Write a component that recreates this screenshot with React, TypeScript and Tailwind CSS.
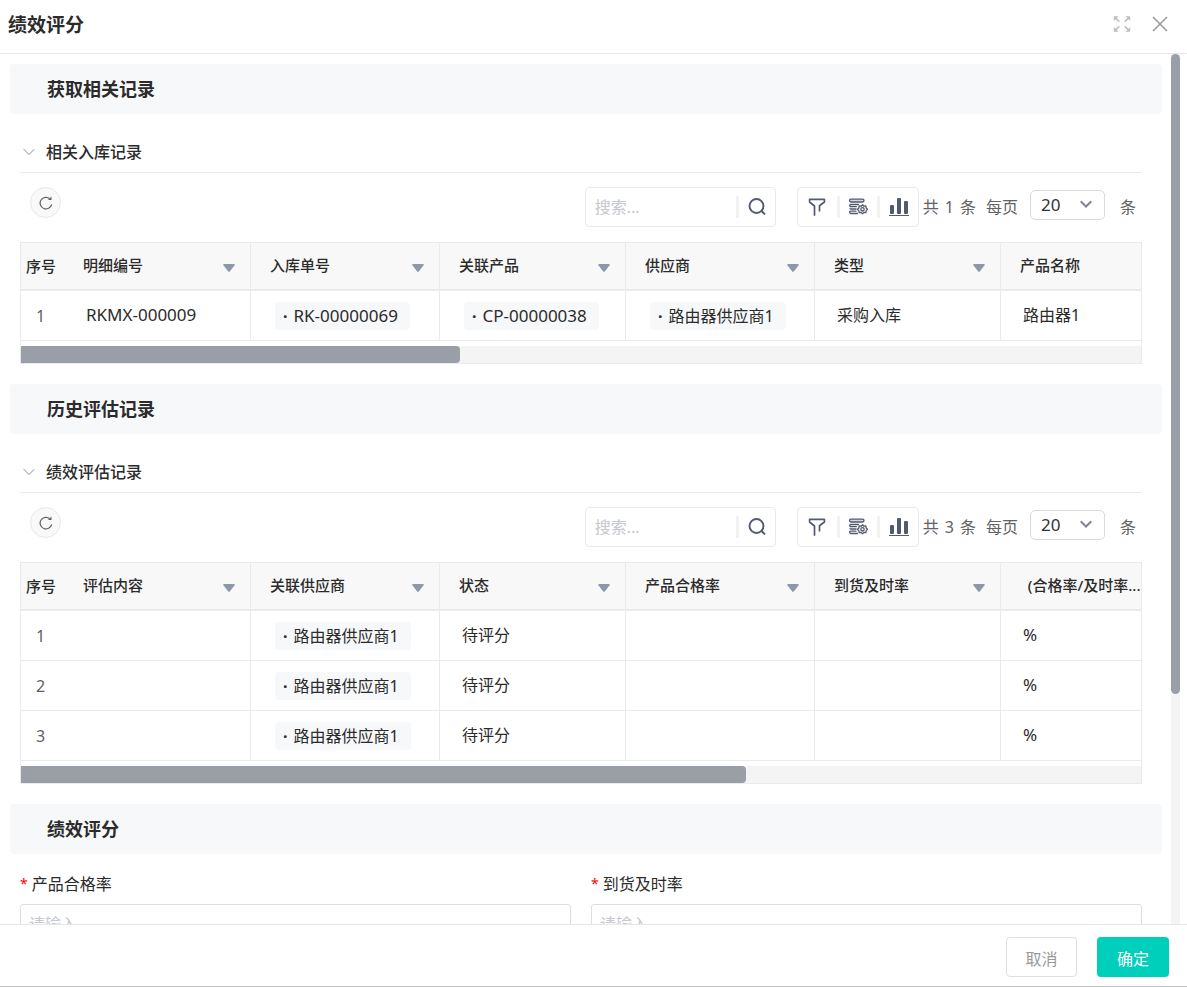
import { useState, type ReactNode } from 'react';

type Cell = { text: string; tag?: boolean; latin?: boolean } | null;

interface RecordPanelProps {
  id: string;
  title: string;
  columns: string[];
  rows: Cell[][];
  thumbClass: string;
}

const inboundColumns = ['明细编号', '入库单号', '关联产品', '供应商', '类型', '产品名称'];
const inboundRows: Cell[][] = [
  [
    { text: 'RKMX-000009', latin: true },
    { text: 'RK-00000069', tag: true, latin: true },
    { text: 'CP-00000038', tag: true, latin: true },
    { text: '路由器供应商1', tag: true },
    { text: '采购入库' },
    { text: '路由器1' },
  ],
];

const reviewColumns = ['评估内容', '关联供应商', '状态', '产品合格率', '到货及时率', '\u00a0\u00a0(合格率/及时率...'];
const reviewRow: Cell[] = [
  null,
  { text: '路由器供应商1', tag: true },
  { text: '待评分' },
  null,
  null,
  { text: '%', latin: true },
];
const reviewRows: Cell[][] = [reviewRow, reviewRow, reviewRow];

const ExpandIcon = () => (
  <svg width="18" height="18" viewBox="0 0 18 18" fill="#bfbfbf" stroke="#bfbfbf">
    <path d="M.8 1.200h4.700L.8 5.900zM17.200 1.200h-4.700l4.700 4.700zM.8 16.800h4.700L.8 12.100zM17.200 16.800h-4.700l4.700-4.700z" stroke="none" />
    <path d="M2 2.400l4.300 4.300M16 2.400l-4.300 4.300M2 15.600l4.300-4.300M16 15.600l-4.300-4.300" strokeWidth="1.600" />
  </svg>
);

const CloseIcon = () => (
  <svg width="16" height="16" viewBox="0 0 16 16" fill="none" stroke="#999" strokeWidth="1.500">
    <path d="M1 1l14 14M15 1L1 15" />
  </svg>
);

const ChevronIcon = ({ className }: { className: string }) => (
  <svg width="12" height="8" viewBox="0 0 12 8" fill="none" stroke="currentColor" className={className}>
    <path d="M.7 1.200L6 6.500l5.300-5.300" />
  </svg>
);

const RefreshIcon = () => (
  <svg width="14" height="14" viewBox="0 0 14 14" fill="none" stroke="#666" strokeWidth="1.300">
    <path d="M12.600 8.300A5.800 5.800 0 1 1 10.900 2.900" />
    <path d="M9 3.900h3.500V.6z" fill="#666" stroke="none" />
  </svg>
);

const SearchIcon = () => (
  <svg width="18" height="18" viewBox="0 0 18 18" fill="none" stroke="#515a6e" strokeWidth="1.900">
    <circle cx="8.500" cy="8" r="7" />
    <path d="M13.500 13l3.500 3.500" />
  </svg>
);

const FilterIcon = () => (
  <svg width="18" height="20" viewBox="0 0 18 20" fill="none" stroke="#515a6e" strokeWidth="1.700" strokeLinejoin="round">
    <path d="M6.500 18.800V9L1.600 5V2.300h14.800V5l-4.900 3.700V14.500" />
  </svg>
);

const FieldsIcon = () => (
  <svg width="20" height="20" viewBox="0 0 20 20" fill="none" stroke="#515a6e" strokeWidth="1.300">
    <rect x="1.500" y="2.200" width="14.500" height="2.800" rx="1.400" fill="#d3d6dc" />
    <path d="M11 7.500H2.800a1 1 0 0 0 0 2.200h6M8.500 12H2a1 1 0 0 0 0 .1M8.500 14.200H2.800a1 1 0 0 0 0 2.300H10" />
    <path
      d="M14.500 7.700l1.300 1.500 2-.2.400 2 1.300 1.300-1.300 1.300-.4 2-2-.2-1.300 1.500-1.300-1.500-2 .2-.4-2-1.300-1.300 1.300-1.300.4-2 2 .2z"
      fill="#fff"
      strokeLinejoin="round"
    />
    <circle cx="14.500" cy="12.300" r="1.700" />
  </svg>
);

const ChartIcon = () => (
  <svg width="20" height="20" viewBox="0 0 20 20" fill="#515a6e">
    <rect x="1" y="8" width="4" height="9" rx="1" />
    <rect x="8" y="1" width="4" height="16" rx="1" />
    <rect x="15" y="4" width="4" height="13" rx="1" />
    <rect x="0" y="18" width="20" height="1" />
  </svg>
);

const SectionBand = ({ children }: { children: ReactNode }) => (
  <h2 className="flex h-[50px] items-center rounded bg-[#f7f8fa] px-[37px] text-[18px] font-bold">{children}</h2>
);

const Divider = () => <span className="h-[22px] w-[3px] bg-[#f2f2f2]" />;

const Tag = ({ children }: { children: ReactNode }) => (
  <span className="ml-[2px] inline-flex h-7 items-center gap-[6px] rounded bg-[#f7f8fa] pr-3 pl-2 align-middle">
    <b className="text-[16px]">·</b>
    {children}
  </span>
);

const RecordPanel = ({ id, title, columns, rows, thumbClass }: RecordPanelProps) => {
  const [open, setOpen] = useState(true);

  return (
    <section className="mb-5 pt-5 pr-5 pl-[10px]">
      <h3 className="border-b border-[#ebebeb]">
        <button
          type="button"
          onClick={() => setOpen(!open)}
          className="flex h-[38px] w-full items-center gap-[11px] pb-[2px] pl-[3px] text-[16px] font-medium"
        >
          <ChevronIcon className="text-[#888]" />
          {title}
        </button>
      </h3>

      {open && (
        <>
          {/* Toolbar */}
          <div className="flex h-[69px] items-center pb-[2px] text-[#606266]">
            <button
              type="button"
              aria-label="刷新"
              className="mb-2 ml-[10px] flex size-[31px] items-center justify-center rounded-full border border-[#e8e8e8] bg-[#f9f9f9]"
            >
              <RefreshIcon />
            </button>
            <div className="ml-auto flex h-10 w-[191px] items-center rounded border border-[#e8eaec]">
              <input
                id={`${id}-search`}
                aria-label="搜索"
                placeholder="搜索..."
                className="h-full min-w-0 flex-1 px-[9px] text-[16px] outline-none placeholder:text-[#c5c8ce]"
              />
              <Divider />
              <button type="button" aria-label="查询" className="flex h-full w-9 items-center justify-center">
                <SearchIcon />
              </button>
            </div>
            <div className="ml-[21px] flex h-10 items-center rounded border border-[#e8eaec]">
              <button type="button" aria-label="筛选" className="flex h-full w-[39px] items-center justify-center">
                <FilterIcon />
              </button>
              <Divider />
              <button type="button" aria-label="字段设置" className="flex h-full w-[37px] items-center justify-center">
                <FieldsIcon />
              </button>
              <Divider />
              <button type="button" aria-label="图表" className="flex h-full w-[38px] items-center justify-center">
                <ChartIcon />
              </button>
            </div>
            <span className="ml-1 flex gap-[6px]">
              <span>共</span>
              <span>{rows.length}</span>
              <span>条</span>
            </span>
            <label htmlFor={`${id}-size`} className="ml-[10px]">
              每页
            </label>
            <div className="relative mb-1 ml-3">
              <select
                id={`${id}-size`}
                defaultValue="20"
                className="block h-[30px] w-[75px] appearance-none rounded-[5px] border border-[#d7dae0] pl-[10px] text-[17px] text-[#333]"
              >
                <option>20</option>
                <option>50</option>
              </select>
              <ChevronIcon className="pointer-events-none absolute top-[10px] right-[13px] stroke-2 text-[#808695]" />
            </div>
            <span className="mr-[6px] ml-[15px]">条</span>
          </div>

          {/* Records */}
          <div className="overflow-hidden border border-[#e8eaec]">
            <table className="w-[1168px] min-w-full table-fixed border-separate border-spacing-0 text-left">
              <colgroup>
                <col className="w-[43px]" />
                <col className="w-[187px]" />
                <col className="w-[189px]" />
                <col className="w-[186px]" />
                <col className="w-[189px]" />
                <col className="w-[186px]" />
                <col />
              </colgroup>
              <thead>
                <tr className="h-12 bg-[#f8f8f9] text-[15px]">
                  <th className="border-b-2 border-[#e8eaec] pl-[5px] font-medium whitespace-nowrap">序号</th>
                  {columns.map((name) => (
                    <th key={name} className="border-r border-b-2 border-[#e8eaec] pr-[15px] pb-[2px] pl-[19px] font-medium">
                      <div className="flex items-center justify-between whitespace-nowrap">
                        {name}
                        <svg width="12" height="8" viewBox="0 0 12 8" fill="#8c98a8" className="mt-[6px] shrink-0">
                          <path d="M1 0h10q1 .3.600 1.200L7 7.200q-1 1-2 0L.4 1.200Q0 .3 1 0z" />
                        </svg>
                      </div>
                    </th>
                  ))}
                </tr>
              </thead>
              <tbody>
                {rows.map((row, index) => (
                  <tr key={index} className="h-[50px]">
                    <td className="border-b border-[#e8eaec] pl-[15px] text-[#606266]">{index + 1}</td>
                    {row.map((cell, i) => (
                      <td
                        key={i}
                        className={`border-r border-b border-[#e8eaec] pl-[22px] whitespace-nowrap ${
                          cell?.latin ? 'text-[17px]' : 'text-[16px]'
                        } ${cell?.tag ? 'pt-px' : 'pb-[2px]'}`}
                      >
                        {cell && (cell.tag ? <Tag>{cell.text}</Tag> : cell.text)}
                      </td>
                    ))}
                  </tr>
                ))}
              </tbody>
            </table>
            <div className="mt-[5px] h-[17px] bg-[#f4f4f4]">
              <div className={`h-full rounded-r bg-[#9a9ea7] ${thumbClass}`} />
            </div>
          </div>
        </>
      )}
    </section>
  );
};

const ScoreField = ({ id, label }: { id: string; label: string }) => (
  <div>
    <label htmlFor={id} className="flex h-[30px] items-center gap-1">
      <span className="text-[14px] text-[#f00]">*</span>
      {label}
    </label>
    <input
      id={id}
      placeholder="请输入"
      className="mt-[5px] block h-10 w-full rounded-[3px] border border-[#dcdee2] px-2 text-[16px] outline-none placeholder:text-[#c5c8ce]"
    />
  </div>
);

export default function App() {
  return (
    <div className="flex h-screen flex-col overflow-hidden border-b border-[#c0c0c0] bg-white font-['Noto_Sans','Noto_Sans_CJK_SC',sans-serif] text-[16px] leading-6 text-[#2b2b2b]">
      <header className="flex h-[54px] shrink-0 items-center border-b border-[#e8e8e8] pr-[19px] pb-[5px] pl-2">
        <h1 className="flex-1 pt-[2px] text-[19px] font-bold">绩效评分</h1>
        <button type="button" aria-label="全屏" className="mr-[21px]">
          <ExpandIcon />
        </button>
        <button type="button" aria-label="关闭">
          <CloseIcon />
        </button>
      </header>

      <div className="flex min-h-0 flex-1">
        <main className="min-w-0 flex-1 overflow-hidden pt-[10px] pr-[9px] pl-[10px]">
          <SectionBand>获取相关记录</SectionBand>
          <RecordPanel
            id="inbound"
            title="相关入库记录"
            columns={inboundColumns}
            rows={inboundRows}
            thumbClass="w-[39.2%]"
          />
          <SectionBand>历史评估记录</SectionBand>
          <RecordPanel
            id="review"
            title="绩效评估记录"
            columns={reviewColumns}
            rows={reviewRows}
            thumbClass="w-[64.7%]"
          />
          <SectionBand>绩效评分</SectionBand>
          <form className="grid grid-cols-2 gap-5 pt-[15px] pr-5 pl-[10px]">
            <ScoreField id="pass-rate" label="产品合格率" />
            <ScoreField id="on-time-rate" label="到货及时率" />
          </form>
        </main>
        <div className="mr-[7px] w-[9px] bg-[#f4f4f4]">
          <div className="h-[73.6%] rounded-full bg-[#9a9ea7]" />
        </div>
      </div>

      <footer className="flex h-[62px] shrink-0 items-start justify-end gap-5 border-t border-[#e8e8e8] pt-3 pr-[18px]">
        <button type="button" className="h-10 w-[71px] rounded border border-[#dfdfdf] pt-[3px] text-[#999]">
          取消
        </button>
        <button type="button" className="h-10 w-[72px] rounded bg-[#00cfbc] pt-[3px] text-white">
          确定
        </button>
      </footer>
    </div>
  );
}
